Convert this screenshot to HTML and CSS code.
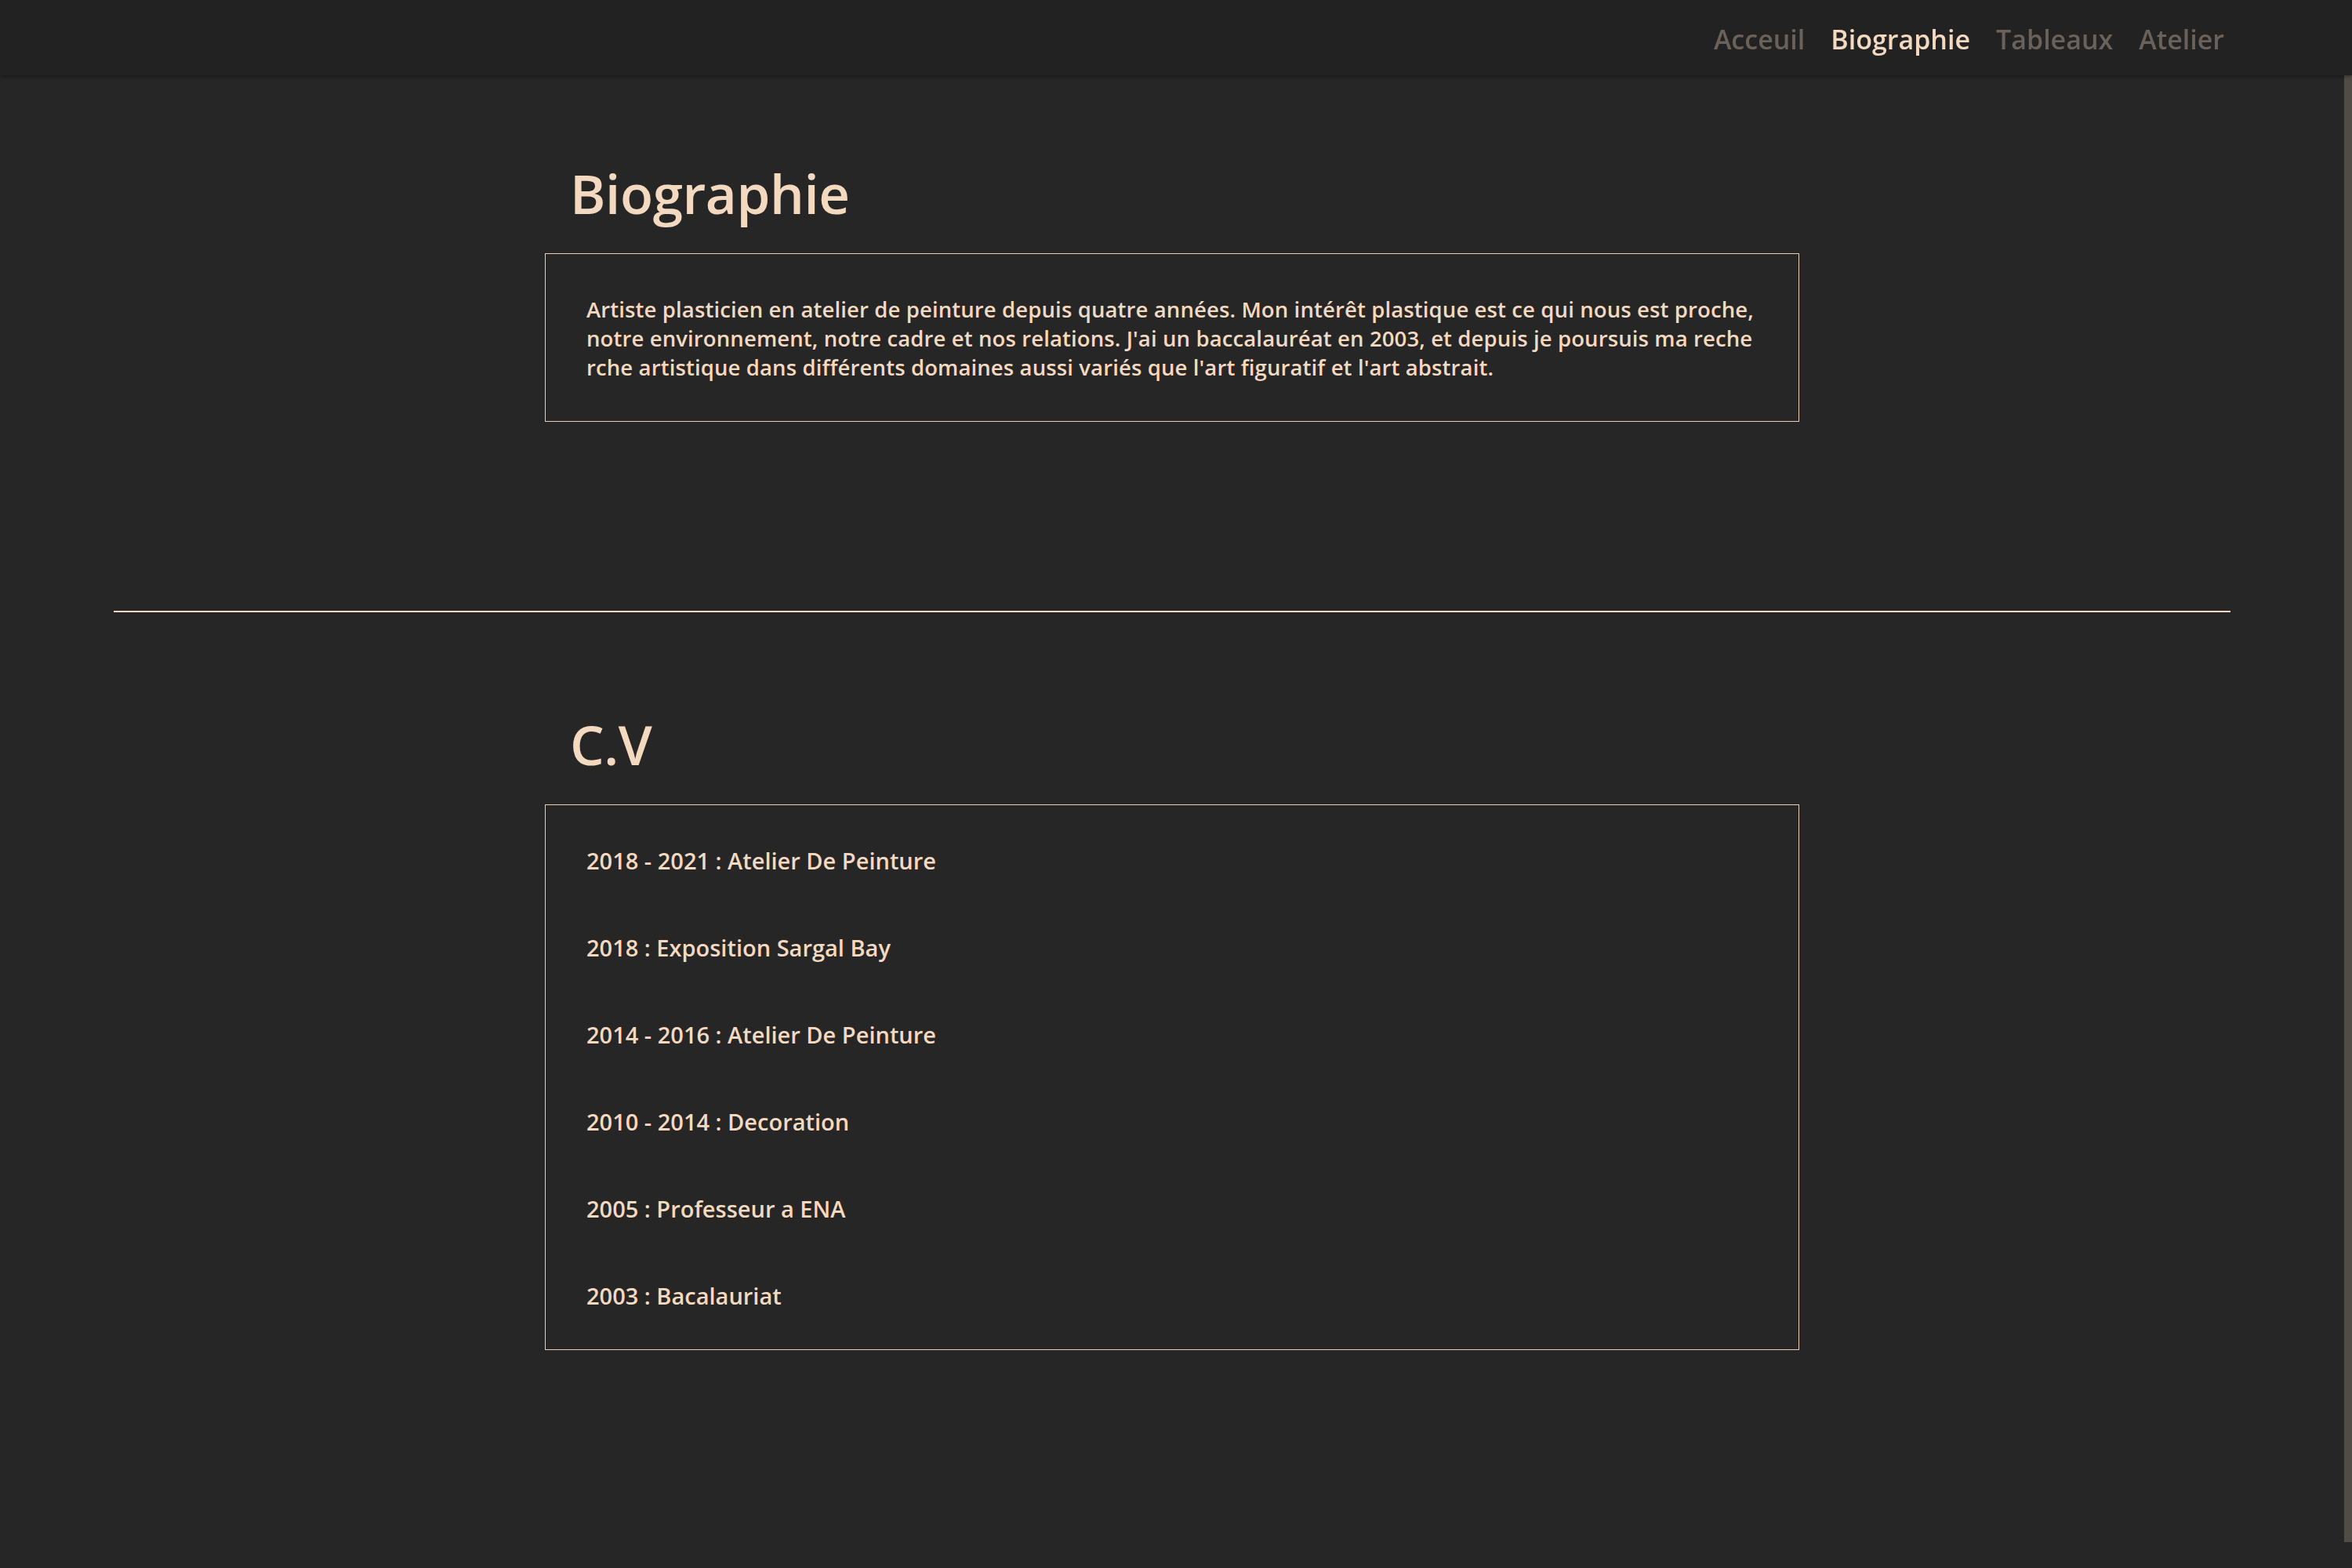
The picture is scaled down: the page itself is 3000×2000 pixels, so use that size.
FILE: index.html
```html
<!DOCTYPE html>
<html lang="fr">
<head>
<meta charset="utf-8">
<title>Biographie</title>
<link rel="stylesheet" href="styles.css">
</head>
<body>
<header class="topbar">
  <nav class="menu">
    <a class="menu-link" href="#">Acceuil</a>
    <a class="menu-link active" href="#">Biographie</a>
    <a class="menu-link" href="#">Tableaux</a>
    <a class="menu-link" href="#">Atelier</a>
  </nav>
</header>
<div class="scroll-thumb"></div>
<main class="page">
  <section class="block block-bio">
    <h1 class="block-title">Biographie</h1>
    <div class="card">
      <p class="bio-text">Artiste plasticien en atelier de peinture depuis quatre années. Mon intérêt plastique est ce qui nous est proche, notre environnement, notre cadre et nos relations. J'ai un baccalauréat en 2003, et depuis je poursuis ma recherche artistique dans différents domaines aussi variés que l'art figuratif et l'art abstrait.</p>
    </div>
  </section>
  <hr class="divider">
  <section class="block block-cv">
    <h2 class="block-title">C.V</h2>
    <ul class="card cv-list">
      <li class="cv-item">2018 - 2021 : Atelier De Peinture</li>
      <li class="cv-item">2018 : Exposition Sargal Bay</li>
      <li class="cv-item">2014 - 2016 : Atelier De Peinture</li>
      <li class="cv-item">2010 - 2014 : Decoration</li>
      <li class="cv-item">2005 : Professeur a ENA</li>
      <li class="cv-item">2003 : Bacalauriat</li>
    </ul>
  </section>
</main>
</body>
</html>
```
FILE: styles.css
```css
html {
  background: #262626;
}
body {
  margin: 0;
  background: #262626;
  color: #f4d9c1;
  font-family: "Open Sans", "Noto Sans", sans-serif;
  font-weight: 600;
}
.topbar {
  height: 96px;
  box-sizing: border-box;
  padding-top: 3px;
  background: #222222;
  box-shadow: 0 2px 4px rgba(0, 0, 0, 0.35);
  display: flex;
  justify-content: flex-end;
  align-items: center;
  padding-right: 148px;
  position: relative;
  z-index: 2;
}
.menu {
  display: flex;
  gap: 3px;
}
.menu-link {
  font-size: 34px;
  color: #6a615a;
  text-decoration: none;
  padding: 0 15px;
}
.menu-link.active {
  color: #f4d9c1;
}
.scroll-thumb {
  position: fixed;
  top: 96px;
  right: 0;
  width: 10px;
  height: 1871px;
  background: #524c47;
}
.page {
  padding-top: 108px;
  padding-right: 10px;
}
.block {
  width: 1600px;
  margin: 0 auto;
}
.block-title {
  margin: 0 0 35px;
  padding-left: 32px;
  font-size: 69px;
  line-height: 84px;
  font-weight: 600;
  letter-spacing: -0.4px;
}
.card {
  border: 1px solid #e9cfb8;
  padding: 52px 52px 50px;
  margin: 0;
}
.bio-text {
  margin: 0;
  font-size: 27.5px;
  line-height: 37px;
  letter-spacing: 0.12px;
  word-break: break-all;
}
.divider {
  width: 2700px;
  margin: 241px auto 126px;
  border: 0;
  border-top: 2px solid #f4d9c1;
  height: 0;
}
.cv-list {
  list-style: none;
  display: flex;
  flex-direction: column;
  gap: 74px;
}
.cv-item {
  font-size: 29px;
  line-height: 37px;
}
```
